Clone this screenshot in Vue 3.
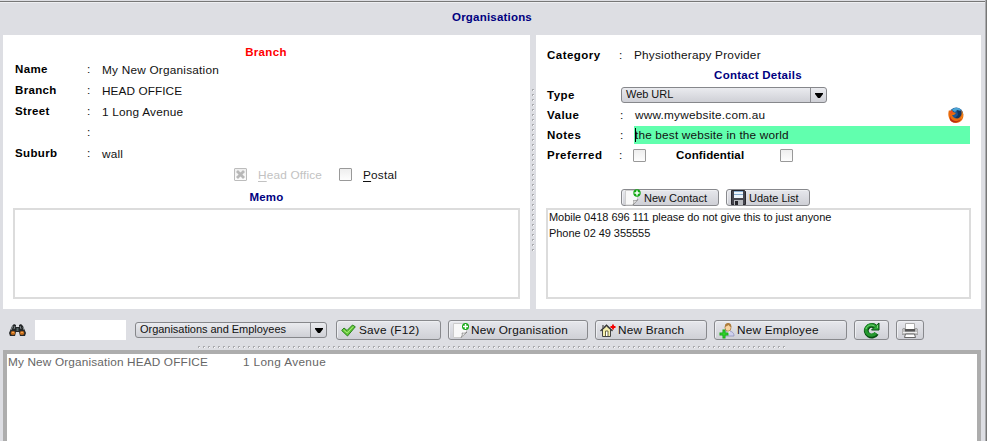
<script setup>
import { ref } from 'vue'

const address = [
  { label: 'Name', value: 'My New Organisation' },
  { label: 'Branch', value: 'HEAD OFFICE', caps: true },
  { label: 'Street', value: '1 Long Avenue' },
  { label: '', value: '' },
  { label: 'Suburb', value: 'wall' }
]
const contacts = [
  'Mobile 0418 696 111 please do not give this to just anyone',
  'Phone 02 49 355555'
]
const search = ref('')
</script>

<template>
  <div class="window">
    <h1 class="heading title">Organisations</h1>

    <div class="panels">
      <section class="panel branch">
        <h2 class="heading red">Branch</h2>
        <div v-for="(row, i) in address" :key="i" class="address-row">
          <b>{{ row.label }}</b><span class="colon">:</span><span class="value" :class="{ caps: row.caps }">{{ row.value }}</span>
        </div>
        <div class="checks">
          <span class="check disabled">
            <svg width="11" height="11" viewBox="0 0 11 11"><path d="M2 2l7 7M9 2l-7 7" stroke="#b8b8b8" stroke-width="2.800" /></svg>
          </span>
          <span class="check-label off"><u>H</u>ead Office</span>
          <span class="check"></span>
          <span class="check-label"><u>P</u>ostal</span>
        </div>
        <h2 class="heading memo-title">Memo</h2>
        <div class="box"></div>
      </section>

      <div class="splitter"><i></i></div>

      <section class="panel contact">
        <div class="row"><b>Category</b><span class="colon">:</span><span>Physiotherapy Provider</span></div>
        <h2 class="heading details-title">Contact Details</h2>
        <div class="row type-row">
          <b>Type</b>
          <div class="combo type-combo"><span>Web URL</span><em><svg width="8" height="5" viewBox="0 0 8 5"><path d="M0 0h8v1L5 5H3L0 1z" /></svg></em></div>
        </div>
        <div class="row inset">
          <b>Value</b><span class="colon">:</span><span class="url">www.mywebsite.com.au</span>
          <svg class="fox" width="16" height="16" viewBox="0 0 16 16">
            <circle cx="8.200" cy="7.500" r="7" fill="#1d5794" />
            <path d="M4 3C6 0 11 0 13 3L11 5 9 3 7 5z" fill="#4aa4d5" />
            <path d="M9 3l4 1 1 4-3 4-4-1 3-3z" fill="#123660" />
            <path d="M1 3l1 1 2-1 1 2 3 1-2 2H4c1 3 5 5 8 2 2-2 2-5 1-7 3 3 3 7 1 10-3 4-9 4-12 0C0 10 0 6 1 3z" fill="#e86a0c" />
            <path d="M2 9c1 5 7 7 11 3-2 4-8 5-11 1z" fill="#b92b13" />
            <path d="M13.500 4c1.500 3 1 6-1 8 2-1 3-5 1-8z" fill="#ffd044" />
            <path d="M2 4h2l1 2-2 1z" fill="#ef4e20" />
          </svg>
        </div>
        <div class="row inset">
          <b>Notes</b><span class="colon">:</span><div class="notes"><i class="caret"></i>the best website in the world</div>
        </div>
        <div class="row">
          <b>Preferred</b><span class="colon">:</span><span class="check pref"></span>
          <b class="conf">Confidential</b><span class="check"></span>
        </div>
        <div class="actions">
          <button class="btn small new-contact">
            <svg width="18" height="17" viewBox="0 0 18 17">
              <path d="M1.500 1.500h12v9l-4 5.500h-8z" fill="#f8f8f8" stroke="#cfcfcf" />
              <path d="M14 10.500L9 16c1-2 1-3 .5-4.500 2 .5 3 0 4.500-1z" fill="#fff" stroke="#777" stroke-width=".7" />
              <circle cx="13" cy="4" r="3.700" fill="#12a812" /><path d="M10.500 4h5M13 1.500v5" stroke="#fff" stroke-width="1.500" />
            </svg>New Contact
          </button>
          <button class="btn small update">
            <svg width="15" height="15" viewBox="0 0 15 15">
              <path d="M.5.5h13l1 1v13H.5z" fill="#46464e" stroke="#27272d" />
              <path d="M3 1h9v7H3z" fill="#edf4fa" /><path d="M3 1h9v1H3zM3 4h9v1H3z" fill="#86acd0" />
              <path d="M3 10h9v5H3z" fill="#b9bbc0" /><path d="M4 11h3v4H4z" fill="#26262c" />
            </svg>Udate List
          </button>
        </div>
        <div class="box list"><div v-for="c in contacts" :key="c">{{ c }}</div></div>
      </section>
    </div>

    <div class="toolbar">
      <svg class="binoculars" width="17" height="14" viewBox="0 0 17 14">
        <path d="M3 3l2-2 2 1v2h3V2l2-1 2 2 3 7-1 3h-5l-1-4H7l-1 4H1l-1-3z" fill="#242729" />
        <path d="M4 3l-2 4M6 3L5 6M11 3l1 3M14 4l1 3" stroke="#828a8c" />
        <path d="M7.500 5h2v3h-2z" fill="#566" />
        <ellipse cx="4" cy="10" rx="2.300" ry="2" fill="#c66e1c" /><ellipse cx="13" cy="10" rx="2.300" ry="2" fill="#c66e1c" />
        <path d="M3 9.500h2M12 9.500h2" stroke="#f2a04d" />
      </svg>
      <input v-model="search" class="search" aria-label="Search" />
      <div class="combo filter"><span>Organisations and Employees</span><em><svg width="8" height="5" viewBox="0 0 8 5"><path d="M0 0h8v1L5 5H3L0 1z" /></svg></em></div>
      <button class="btn save">
        <svg width="15" height="13" viewBox="0 0 15 13"><path d="M.7 6.500L3 4l3 2.500L11.500 1l2.800 1.800L6.500 12z" fill="#64c936" stroke="#267e1d" stroke-linejoin="round" /><path d="M2.500 6l3.700 3 6-6.500" fill="none" stroke="#a3e77b" /></svg>
        Save (F12)
      </button>
      <button class="btn org">
        <svg width="18" height="17" viewBox="0 0 18 17">
          <path d="M1.500 1.500h13v9l-4 5h-9z" fill="#f8f8f8" stroke="#ccc" />
          <path d="M15 10L9 15.500c1.500-2 1.500-3 1-4.500 2 .5 3.500 0 5-1z" fill="#fff" stroke="#777" stroke-width=".7" />
          <circle cx="13.500" cy="4.500" r="3.500" fill="#12a812" /><path d="M11 4.500h5M13.500 2v5" stroke="#fff" stroke-width="1.500" />
        </svg>New Organisation
      </button>
      <button class="btn br">
        <svg width="16" height="15" viewBox="0 0 16 15">
          <path d="M2.500 6.500v7h8v-7L6.500 3z" fill="#f5efad" stroke="#444" />
          <path d="M.5 8l6-6 6 6" fill="none" stroke="#333" stroke-width="1.200" />
          <path d="M3 5V2" stroke="#666" stroke-width="1.500" />
          <path d="M5.500 13V8h2.500v5" fill="#fff" stroke="#6b6840" />
          <path d="M10.500 4h5M13 1.500v5" stroke="#f40000" stroke-width="1.800" />
        </svg>New Branch
      </button>
      <button class="btn emp">
        <svg width="16" height="17" viewBox="0 0 16 17">
          <path d="M4 14c0-4 2-5 5-5s6 1 6 5z" fill="#cfd1ee" stroke="#9092bd" stroke-width=".8" />
          <path d="M8 9l1.500 4L11 9z" fill="#fff" />
          <ellipse cx="9" cy="5.500" rx="3" ry="3.800" fill="#f8d4a0" stroke="#a36f37" stroke-width=".7" />
          <path d="M6 5C5 0 13-.5 12.300 5 11 5 10 3.500 9.500 3 8 4.500 7 4 6 5z" fill="#ad7c3c" />
          <path d="M.5 12h9M5 7.500v9" stroke="#16a916" stroke-width="3" /><path d="M1.500 12h7M5 8.500v7" stroke="#39db2e" />
        </svg>New Employee
      </button>
      <button class="btn icon refresh" aria-label="Refresh">
        <svg width="17" height="17" viewBox="0 0 17 17">
          <path d="M13.500 11.500A5.500 5.300 0 1 1 12 4.500" fill="none" stroke="#084d12" stroke-width="4.800" />
          <path d="M16 1v7H8.500l2.500-2.500z" fill="#2aa535" stroke="#084d12" />
          <path d="M12.800 11A5.400 5.200 0 1 1 12.500 4.700" fill="none" stroke="#25982f" stroke-width="3.200" />
          <path d="M3 7C4 3.500 8 2 11.500 4M14.500 3v3" fill="none" stroke="#74d874" />
        </svg>
      </button>
      <button class="btn icon print" aria-label="Print">
        <svg width="16" height="15" viewBox="0 0 16 15">
          <path d="M3.500.5h9v6h-9z" fill="#fff" stroke="#aaa" />
          <path d="M1 5.500h2v2h10v-2h2l1 2v4H0v-4z" fill="#c0c0c0" stroke="#888" stroke-width=".6" />
          <path d="M3 6h10v2.500H3z" fill="#555" /><path d="M1 9.500h14" stroke="#eee" />
          <path d="M3.500 11h9l1 3.500h-11z" fill="#fff" stroke="#666" />
        </svg>
      </button>
    </div>
    <div class="hsplit"></div>
    <div class="results"><span class="name">My New Organisation HEAD OFFICE</span><span class="street">1 Long Avenue</span></div>
  </div>
</template>

<style>
body { margin: 0; overflow: hidden; }
</style>

<style scoped>
* { box-sizing: border-box; }
.window { width: 987px; height: 441px; overflow: hidden; display: flex; flex-direction: column; background: #dddee3; border-right: 1px solid #777; box-shadow: inset -1px 0 #aaabae, inset 0 1px #dddee3, inset 0 2px #777, inset 0 3px #eeeff2; font: 11.8px/16px "Liberation Sans", Arial, sans-serif; letter-spacing: .22px; color: #111; white-space: nowrap; }
b { font-size: 11.5px; font-weight: bold; letter-spacing: .48px; color: #000; }
.heading { margin: 0; font-size: 11.5px; line-height: 16px; letter-spacing: .2px; text-align: center; color: #000080; }
.title { width: 984px; height: 35px; padding-top: 9px; flex: none; }
.panels { display: flex; height: 274px; padding-left: 3px; flex: none; }
.panel { background: #fff; display: flex; flex-direction: column; }
.branch { width: 527px; padding: 9px 10px 10px; }
.branch .red { height: 15px; padding-right: 1px; color: #f00; letter-spacing: .35px; }
.address-row { display: flex; height: 21px; padding: 2px 0 0 2px; }
.address-row b { width: 72px; letter-spacing: .35px; }
.address-row .colon { width: 15px; }
.value { padding-top: 1px; }
.value.caps { letter-spacing: .07px; }
.checks { display: flex; align-items: center; height: 21px; padding-left: 221px; }
.check { width: 13px; height: 13px; border: 1px solid #999; border-radius: 1px; background: linear-gradient(#eee, #fdfdfd); flex: none; display: inline-flex; align-items: center; justify-content: center; }
.check.disabled { border-color: #bcbcbc; }
.check-label { margin-left: 11px; padding-top: 1px; }
.check-label.off { width: 81px; color: #c2c2c2; letter-spacing: .18px; }
.check-label u { text-underline-offset: 2px; }
.memo-title { padding-top: 4px; height: 23px; }
.box { height: 91px; border: 2px solid #dcdcdc; background: #fff; flex: none; }
.splitter { width: 6px; padding: 54px 0 0 2px; }
.splitter i { display: block; width: 2px; height: 165px; background: conic-gradient(from 90deg at 1px 1px, #fff 90deg, #aaabaf 0) 0 0 / 2px 5px; -webkit-mask: repeating-linear-gradient(#000 0 2px, transparent 2px 5px); mask: repeating-linear-gradient(#000 0 2px, transparent 2px 5px); }
.contact { width: 445px; padding: 10px; }
.contact .details-title { height: 20px; padding: 2px 1px 0 0; letter-spacing: .27px; }
.row { display: flex; align-items: center; height: 20px; padding-left: 1px; }
.row > b:first-child { width: 72px; }
.row .colon { width: 15px; }
.row.inset .colon { padding-left: 1px; }
.row .url { margin-left: 1px; flex: 1; }
.type-row > b:first-child { width: 74px; }
.combo { display: flex; height: 16px; border: 1px solid #86878b; border-radius: 3px; background: linear-gradient(#eaebef, #cfd0d6); font-size: 11px; line-height: 13px; letter-spacing: -.03px; }
.combo span { flex: 1; padding-left: 4px; }
.combo em { width: 16px; border-left: 1px solid #8d8e93; display: flex; align-items: center; justify-content: center; }
.type-combo { width: 206px; }
.fox { margin-right: 7px; }
.notes { flex: 1; height: 18px; line-height: 18px; background: #61ffae; margin-right: 1px; padding-left: 1px; position: relative; letter-spacing: .17px; }
.caret { position: absolute; left: 1px; top: 2px; width: 1px; height: 14px; background: #000; }
.check.pref { margin-left: -1px; }
.conf { width: 104px; margin-left: 30px; letter-spacing: .15px; }
.actions { display: flex; gap: 7px; height: 43px; padding: 24px 0 0 75px; }
.btn { display: flex; align-items: center; margin: 0; padding: 0 0 0 4px; height: 20px; border: 1px solid #88898d; border-radius: 3px; background: linear-gradient(#e6e7ec, #cfd0d6); box-shadow: inset 1px 1px #eeeff2; color: #111; font: inherit; letter-spacing: .2px; white-space: nowrap; flex: none; }
.btn svg { flex: none; margin-right: 2px; }
.btn.small { height: 17px; font-size: 11px; letter-spacing: 0; }
.new-contact { width: 98px; padding-left: 2px; }
.update { width: 84px; }
.update svg { margin-right: 3px; }
.list { padding: 0 1px; font-size: 11px; letter-spacing: -.05px; }
.list div:first-child { margin-top: -1px; }
.toolbar { display: flex; align-items: center; height: 37px; padding: 5px 0 0 9px; flex: none; }
.search { width: 91px; height: 20px; margin: 0 9px; border: 0; padding: 0 3px; background: #fff; }
.filter { width: 192px; margin-right: 9px; }
.save { width: 105px; margin-right: 7px; }
.save svg { margin-right: 3px; }
.org { width: 140px; margin-right: 7px; padding-left: 3px; }
.org svg { margin-right: 1px; }
.br { width: 112px; margin-right: 7px; }
.emp { width: 133px; margin-right: 7px; }
.icon { justify-content: center; padding: 0; }
.icon svg { margin: 0; }
.refresh { width: 35px; margin-right: 7px; }
.print { width: 28px; }
.hsplit { height: 2px; width: 587px; margin: 0 0 2px 198px; flex: none; background: conic-gradient(from 90deg at 1px 1px, #fff 90deg, #aaabaf 0) 0 0 / 5px 2px; -webkit-mask: repeating-linear-gradient(90deg, #000 0 2px, transparent 2px 5px); mask: repeating-linear-gradient(90deg, #000 0 2px, transparent 2px 5px); }
.results { flex: 1; width: 978px; margin-left: 3px; padding-left: 1px; border: 4px solid #adadad; border-bottom: 0; background: #fff; color: #666; }
.name { display: inline-block; width: 235px; letter-spacing: .15px; }
.street { letter-spacing: .35px; }
</style>
